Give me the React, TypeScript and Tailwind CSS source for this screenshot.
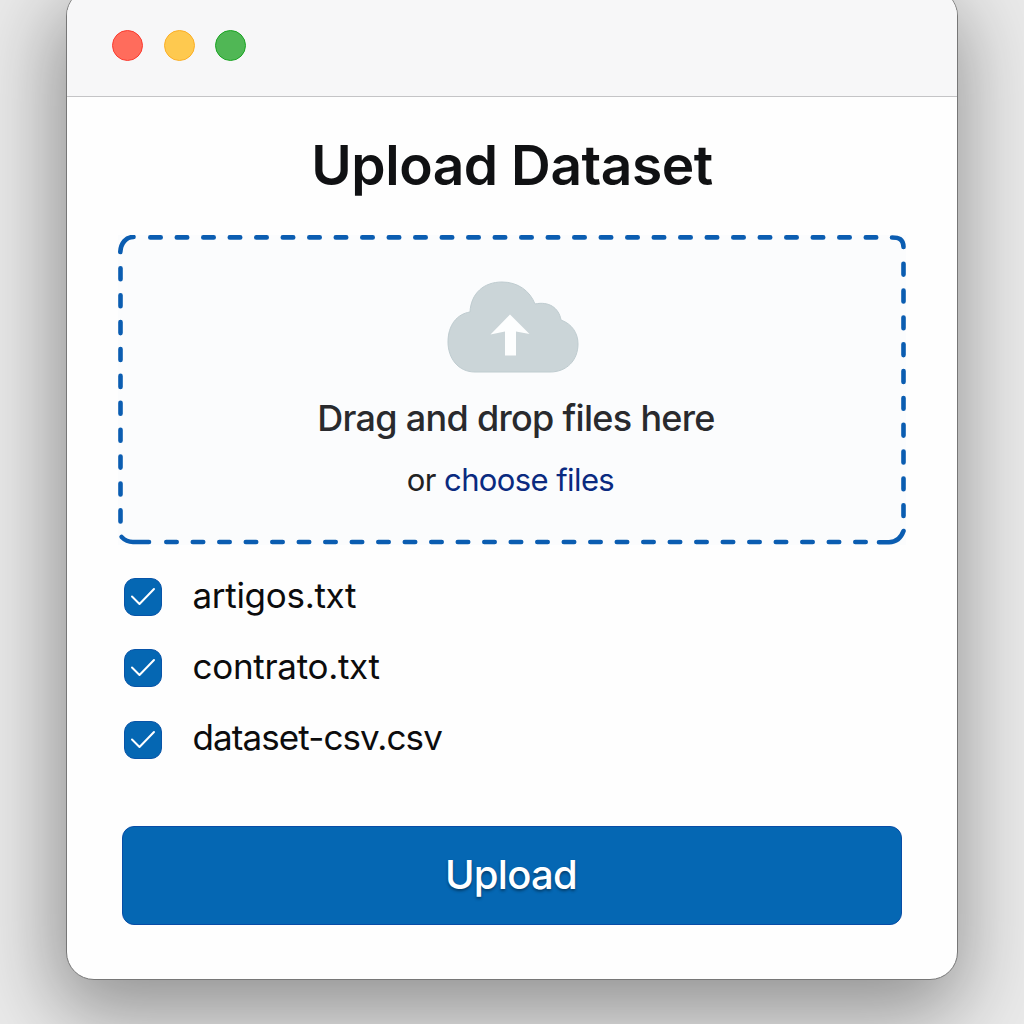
const files = [
  { name: "artigos.txt", tracking: "tracking-[-0.3px]" },
  { name: "contrato.txt", tracking: "tracking-[-0.3px]" },
  { name: "dataset-csv.csv", tracking: "tracking-[-0.9px]" },
];

function DashedOutline() {
  const corners = [
    "M2.3 17 C2.800 8 8 2 15.500 2",
    "M774 2.500 C781 2.500 785.200 4 785.500 12",
    "M3.600 302 C7 305.500 10 307 15 307 H31",
    "M761 307.300 H771 C779 307 783 303 785.500 296",
  ];
  return (
    <svg className="absolute inset-0 h-full w-full" viewBox="0 0 788 310" fill="none" stroke="#0b5db1" strokeWidth="4.6" strokeLinecap="round">
      {corners.map((d) => (
        <path key={d} d={d} />
      ))}
      <path d="M32.3 2.4 H760" strokeDasharray="10.4 16.1" />
      <path d="M48.3 307 H750" strokeDasharray="10.4 16.1" />
      <path d="M2.5 33.3 V290" strokeDasharray="11 15.9" />
      <path d="M785.5 28.8 V286" strokeDasharray="10.8 16.030" />
    </svg>
  );
}

function CloudIcon() {
  return (
    <svg className="ml-[2px] h-[92px] w-[132px]" viewBox="0 0 132 92">
      <path
        d="M28 91 C11 91 1 77 1 61 C1 44 10 33 23 31 C24 12 37 1 55 1 C71 1 83 10 88 23 C102 20 112 27 114 39 C125 43 131 52 131 63 C131 79 120 91 103 91 Z"
        fill="#cbd5d8"
        stroke="#bfccd0"
        strokeWidth="1"
      />
      <path d="M63 33.500 L82.500 53 L69 50.500 V74.500 H58 V50.500 L43.500 53.500 Z" fill="#fdfefe" />
    </svg>
  );
}

export default function App() {
  return (
    <div className="h-[1024px] w-[1024px] overflow-hidden bg-[#eaeaea] font-['Inter',sans-serif]">
      <main className="mx-auto -mt-3 flex h-[992px] w-[892px] flex-col overflow-hidden rounded-[28px] border border-[#777] bg-[#fefefe] shadow-[-4px_26px_80px_8px_rgba(0,0,0,0.38)]">
        <header className="flex h-[108px] shrink-0 items-center gap-[20.6px] border-b border-[#c4c4c6] bg-[#f7f7f8] pt-[6px] pl-[45px]">
          <span className="size-[31px] rounded-full border border-[#fb3b30] bg-[#ff6c5c]" />
          <span className="size-[31px] rounded-full border border-[#fbaf27] bg-[#fec94f]" />
          <span className="size-[31px] rounded-full border border-[#1ba524] bg-[#50b755]" />
        </header>
        <h1 className="mt-[34px] text-center text-[55px] leading-[68px] font-semibold tracking-[-0.45px] text-[#101113]">Upload Dataset</h1>
        <section className="relative mx-[51px] mt-[36px] flex h-[310px] shrink-0 flex-col items-center bg-[#fbfcfd] pt-[46px]">
          <DashedOutline />
          <CloudIcon />
          <p className="mt-[21px] pl-[8px] text-[36px] leading-[48px] font-[450] tracking-[-0.7px] text-[#292a2d]">Drag and drop files here</p>
          <p className="mt-[18px] pr-[3px] text-[31px] leading-[40px] tracking-[-0.6px] text-[#222]">
            or <a className="text-[#0a2a80]">choose files</a>
          </p>
        </section>
        <ul className="mt-[33px] ml-[57px] flex flex-col gap-[33.4px]">
          {files.map(({ name, tracking }) => (
            <li key={name} className="flex h-[38px] items-center gap-[30.5px]">
              <span className="flex size-[38px] items-center justify-center rounded-[11px] border border-[#0854a8] bg-[#0567b3]">
                <svg className="size-[36px]" viewBox="0 0 36 36" fill="none" stroke="#fff" strokeWidth="2" strokeLinecap="round" strokeLinejoin="round">
                  <path d="M7 17.500 L14.500 25 L29 10" />
                </svg>
              </span>
              <span className={`pb-[5px] text-[35px] leading-[38px] text-[#0c0c0d] ${tracking}`}>{name}</span>
            </li>
          ))}
        </ul>
        <button className="mx-[55px] mt-[67px] h-[99px] rounded-[12px] border border-[#084da6] bg-[#0567b3] pr-[2px] text-[40px] font-medium tracking-[-0.7px] text-white [text-shadow:0_2px_3px_rgba(0,0,0,0.4)]">
          Upload
        </button>
      </main>
    </div>
  );
}
